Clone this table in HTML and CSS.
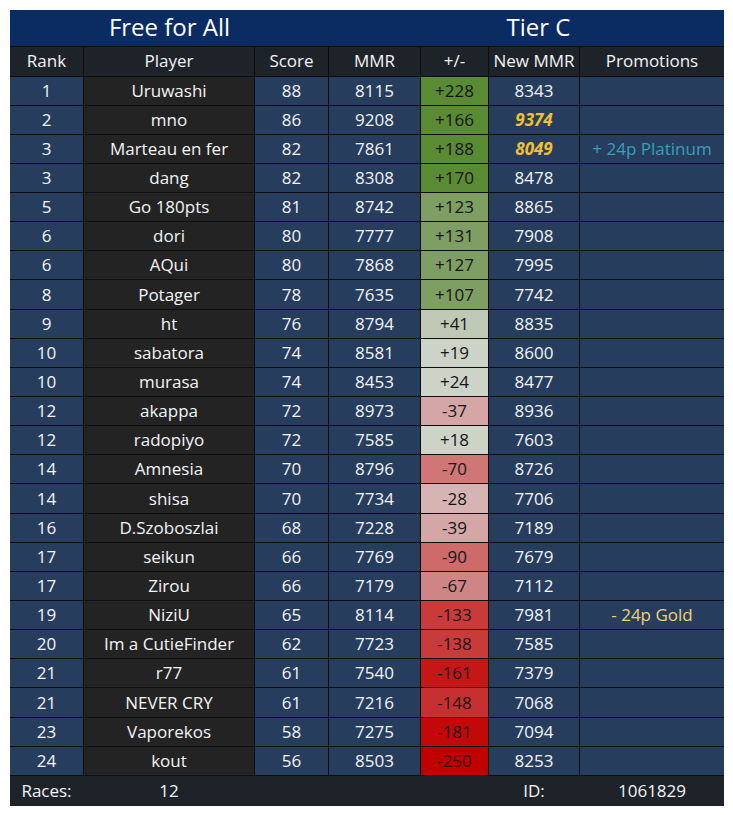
FILE: index.html
```html
<!DOCTYPE html>
<html>
<head>
<meta charset="utf-8">
<link rel="stylesheet" href="styles.css">
</head>
<body>
<div class="board">
  <div class="title">
    <div class="t-left">Free for All</div>
    <div class="t-right">Tier C</div>
  </div>
  <div class="grid">
    <div class="h">Rank</div><div class="h">Player</div><div class="h">Score</div><div class="h">MMR</div><div class="h">+/-</div><div class="h">New MMR</div><div class="h">Promotions</div>

    <div class="c">1</div><div class="p">Uruwashi</div><div class="c">88</div><div class="c">8115</div><div class="d g1">+228</div><div class="c">8343</div><div class="c"></div>
    <div class="c">2</div><div class="p">mno</div><div class="c">86</div><div class="c">9208</div><div class="d g1">+166</div><div class="c hi">9374</div><div class="c"></div>
    <div class="c">3</div><div class="p">Marteau en fer</div><div class="c">82</div><div class="c">7861</div><div class="d g1">+188</div><div class="c hi">8049</div><div class="c plat">+ 24p Platinum</div>
    <div class="c">3</div><div class="p">dang</div><div class="c">82</div><div class="c">8308</div><div class="d g1">+170</div><div class="c">8478</div><div class="c"></div>
    <div class="c">5</div><div class="p">Go 180pts</div><div class="c">81</div><div class="c">8742</div><div class="d g2">+123</div><div class="c">8865</div><div class="c"></div>
    <div class="c">6</div><div class="p">dori</div><div class="c">80</div><div class="c">7777</div><div class="d g2">+131</div><div class="c">7908</div><div class="c"></div>
    <div class="c">6</div><div class="p">AQui</div><div class="c">80</div><div class="c">7868</div><div class="d g2">+127</div><div class="c">7995</div><div class="c"></div>
    <div class="c">8</div><div class="p">Potager</div><div class="c">78</div><div class="c">7635</div><div class="d g2">+107</div><div class="c">7742</div><div class="c"></div>
    <div class="c">9</div><div class="p">ht</div><div class="c">76</div><div class="c">8794</div><div class="d g3">+41</div><div class="c">8835</div><div class="c"></div>
    <div class="c">10</div><div class="p">sabatora</div><div class="c">74</div><div class="c">8581</div><div class="d n0">+19</div><div class="c">8600</div><div class="c"></div>
    <div class="c">10</div><div class="p">murasa</div><div class="c">74</div><div class="c">8453</div><div class="d n0">+24</div><div class="c">8477</div><div class="c"></div>
    <div class="c">12</div><div class="p">akappa</div><div class="c">72</div><div class="c">8973</div><div class="d r1">-37</div><div class="c">8936</div><div class="c"></div>
    <div class="c">12</div><div class="p">radopiyo</div><div class="c">72</div><div class="c">7585</div><div class="d n0">+18</div><div class="c">7603</div><div class="c"></div>
    <div class="c">14</div><div class="p">Amnesia</div><div class="c">70</div><div class="c">8796</div><div class="d r2b">-70</div><div class="c">8726</div><div class="c"></div>
    <div class="c">14</div><div class="p">shisa</div><div class="c">70</div><div class="c">7734</div><div class="d r0">-28</div><div class="c">7706</div><div class="c"></div>
    <div class="c">16</div><div class="p">D.Szoboszlai</div><div class="c">68</div><div class="c">7228</div><div class="d r1">-39</div><div class="c">7189</div><div class="c"></div>
    <div class="c">17</div><div class="p">seikun</div><div class="c">66</div><div class="c">7769</div><div class="d r2c">-90</div><div class="c">7679</div><div class="c"></div>
    <div class="c">17</div><div class="p">Zirou</div><div class="c">66</div><div class="c">7179</div><div class="d r2a">-67</div><div class="c">7112</div><div class="c"></div>
    <div class="c">19</div><div class="p">NiziU</div><div class="c">65</div><div class="c">8114</div><div class="d r3">-133</div><div class="c">7981</div><div class="c gold">- 24p Gold</div>
    <div class="c">20</div><div class="p">Im a CutieFinder</div><div class="c">62</div><div class="c">7723</div><div class="d r3">-138</div><div class="c">7585</div><div class="c"></div>
    <div class="c">21</div><div class="p">r77</div><div class="c">61</div><div class="c">7540</div><div class="d r4a">-161</div><div class="c">7379</div><div class="c"></div>
    <div class="c">21</div><div class="p">NEVER CRY</div><div class="c">61</div><div class="c">7216</div><div class="d r3b">-148</div><div class="c">7068</div><div class="c"></div>
    <div class="c">23</div><div class="p">Vaporekos</div><div class="c">58</div><div class="c">7275</div><div class="d r4b">-181</div><div class="c">7094</div><div class="c"></div>
    <div class="c">24</div><div class="p">kout</div><div class="c">56</div><div class="c">8503</div><div class="d r4c">-250</div><div class="c">8253</div><div class="c"></div>
  </div>
  <div class="footer">
    <div>Races:</div><div>12</div><div></div><div></div><div></div><div>ID:</div><div>1061829</div>
  </div>
</div>
</body>
</html>
```

FILE: styles.css
```css
html, body {
  margin: 0;
  padding: 0;
  background: #ffffff;
}
body {
  padding: 10px 0 0 10px;
  font-family: "Open Sans", "Noto Sans", sans-serif;
}
.board {
  width: 714px;
  background: #0d0d0f;
}
.title {
  display: grid;
  grid-template-columns: 319px 395px;
  height: 36px;
  background: #0b2c63;
  color: #ffffff;
  font-size: 24px;
  align-items: center;
  text-align: center;
}
.t-left, .t-right {
  margin-top: -4px;
}
.t-right {
  padding-left: 24px;
}
.grid, .footer {
  display: grid;
  grid-template-columns: 73px 170px 73px 91px 67px 90px 144px;
  column-gap: 1px;
}
.grid {
  row-gap: 1px;
  padding-top: 1px;
  grid-template-rows: 28.5px;
  grid-auto-rows: 28.15px;
}
.grid > div {
  display: flex;
  align-items: center;
  justify-content: center;
  font-size: 17px;
  color: #f2f4f7;
  white-space: nowrap;
  padding-bottom: 1px;
}
.h {
  background: #1e232a;
}
.c {
  background: #273d5e;
}
.p {
  background: #232323;
}
.grid > .d {
  color: #161616;
}
.grid > .hi {
  color: #f0c030;
  font-style: italic;
  font-weight: 700;
}
.grid > .plat {
  color: #3a9fb8;
}
.grid > .gold {
  color: #f1d272;
}
.g1 { background: #5a8a34; }
.g2 { background: #7e9e64; }
.g3 { background: #bfc9b5; }
.n0 { background: #cdd3c7; }
.r0 { background: #d6b4b4; }
.r1 { background: #d4a6a6; }
.r2a { background: #d08585; }
.r2b { background: #cf7676; }
.r2c { background: #ce6a6a; }
.r3 { background: #c93b3b; }
.r3b { background: #c63030; }
.r4a { background: #c41717; }
.r4b { background: #c20808; }
.grid > .r4c { background: #c00000; color: #3a0505; }
.footer {
  height: 30px;
  margin-top: 1px;
  background: #1e232a;
  align-items: center;
  text-align: center;
  color: #f2f4f7;
  font-size: 17px;
}
```
